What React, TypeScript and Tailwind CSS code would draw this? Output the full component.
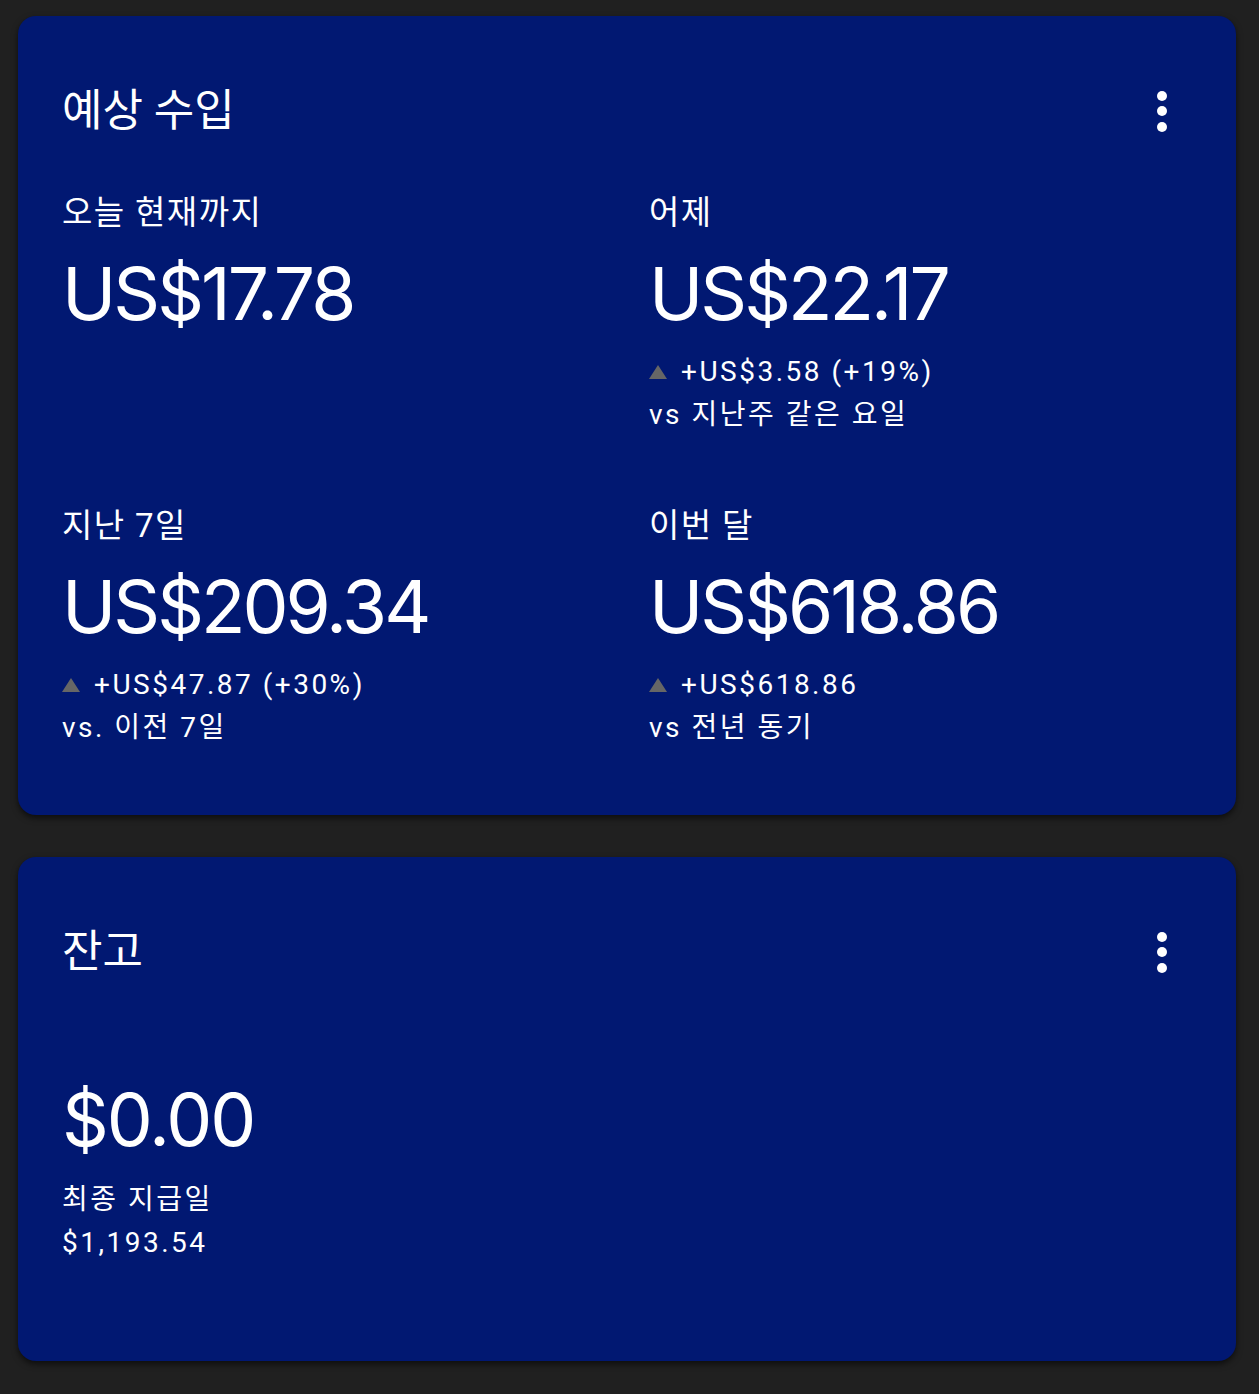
import React from 'react';

const kr = "font-['Roboto','Noto_Sans_CJK_KR',sans-serif]";
const big = "font-['Inter','Noto_Sans_CJK_KR',sans-serif]";

function Kebab() {
  return (
    <button className="flex flex-col items-center gap-[5.5px]" aria-label="more">
      <span className="block h-[10px] w-[10px] rounded-full bg-white" />
      <span className="block h-[10px] w-[10px] rounded-full bg-white" />
      <span className="block h-[10px] w-[10px] rounded-full bg-white" />
    </button>
  );
}

interface StatProps {
  label: string;
  value: string;
  delta?: string;
  compare?: string;
}

function Stat({ label, value, delta, compare }: StatProps) {
  return (
    <div className="h-[313px]">
      <div className={`${kr} text-[33px] leading-[33px] tracking-[1.4px] text-white`}>{label}</div>
      <div className={`${big} mt-[28px] text-[73px] leading-[73px] tracking-[-3px] text-white`}>{value}</div>
      {delta && (
        <div className={`${kr} mt-[20px] text-[28px] leading-[43px] tracking-[2.5px] text-white`}>
          <div className="flex items-center">
            <span className="mr-[14px] inline-block h-0 w-0 border-x-[9.5px] border-b-[14px] border-x-transparent border-b-[#666666]" />
            <span>{delta}</span>
          </div>
          <div>{compare}</div>
        </div>
      )}
    </div>
  );
}

export default function App() {
  return (
    <div className="min-h-[1394px] bg-[#202020] pl-[18px] pr-[23px] pt-[16px] pb-[33px]">
      {/* Estimated earnings */}
      <div className="h-[799px] rounded-[18px] bg-[#011872] pl-[44px] pr-[69px] pt-[73px] shadow-[0_3px_6px_rgba(0,0,0,0.6)]">
        <div className="flex h-[44px] items-center justify-between">
          <h2 className={`${kr} text-[44px] font-normal leading-[44px] text-white`}>예상 수입</h2>
          <Kebab />
        </div>
        <div className="mt-[63px] grid grid-cols-[587px_1fr]">
          <Stat label="오늘 현재까지" value="US$17.78" />
          <Stat label="어제" value="US$22.17" delta="+US$3.58 (+19%)" compare="vs 지난주 같은 요일" />
          <Stat label="지난 7일" value="US$209.34" delta="+US$47.87 (+30%)" compare="vs. 이전 7일" />
          <Stat label="이번 달" value="US$618.86" delta="+US$618.86" compare="vs 전년 동기" />
        </div>
      </div>

      {/* Balance */}
      <div className="mt-[42px] h-[504px] rounded-[18px] bg-[#011872] pl-[44px] pr-[69px] pt-[73px] shadow-[0_3px_6px_rgba(0,0,0,0.6)]">
        <div className="flex h-[44px] items-center justify-between">
          <h2 className={`${kr} text-[44px] font-normal leading-[44px] text-white`}>잔고</h2>
          <Kebab />
        </div>
        <div className={`${big} mt-[109px] text-[73px] leading-[73px] tracking-[-2px] text-white`}>$0.00</div>
        <div className={`${kr} mt-[22px] text-[28px] leading-[43px] tracking-[2.5px] text-white`}>
          <div>최종 지급일</div>
          <div>$1,193.54</div>
        </div>
      </div>
    </div>
  );
}
